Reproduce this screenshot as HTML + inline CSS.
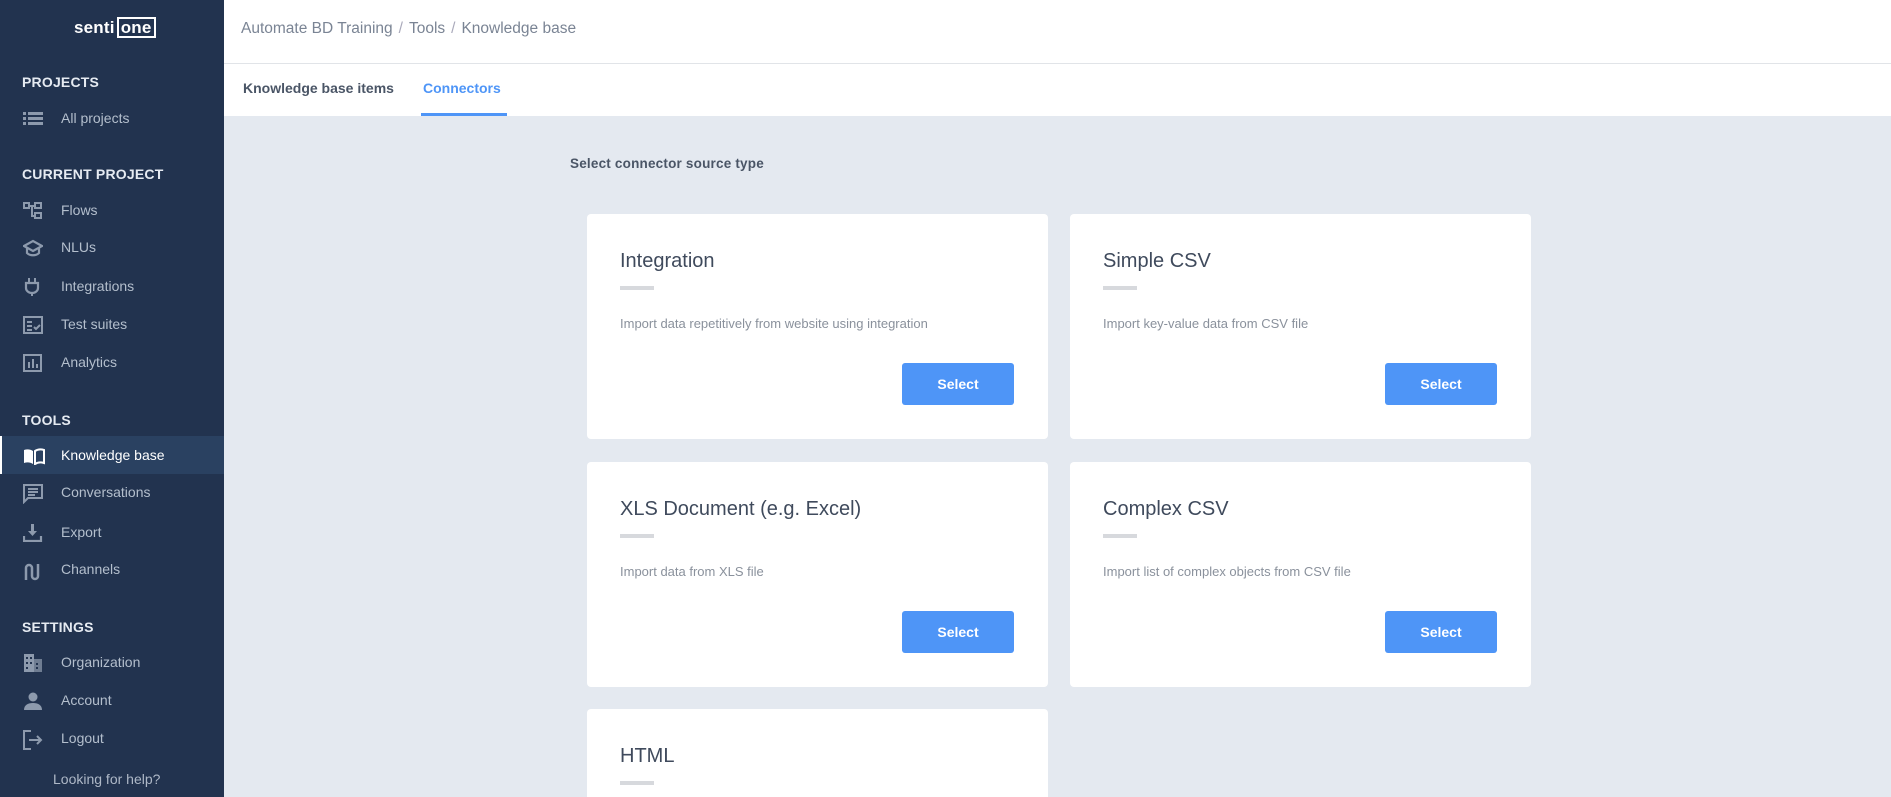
<!DOCTYPE html>
<html style="width:1891px;height:797px;overflow:hidden"><head><meta charset="utf-8"><style>
*{box-sizing:border-box;margin:0;padding:0}
body{width:1891px;height:797px;overflow:hidden;background:#e4e9f0;font-family:"Liberation Sans",sans-serif;position:relative}
.sb{position:absolute;left:0;top:0;width:224px;height:797px;background:#22334f;color:#aeb8c7}
.logo{position:absolute;left:74px;top:17px;color:#fff;font-size:17px;font-weight:bold;letter-spacing:0.2px}
.logo span{border:2px solid #fff;padding:0 2px;margin-left:2px;display:inline-block;line-height:17px}
.h{position:absolute;left:22px;font-size:14px;font-weight:bold;color:#e6ebf2;letter-spacing:0.2px}
.it{position:absolute;left:0;width:224px;height:38px;font-size:14px;color:#b4bfcd;line-height:38px;padding-left:61px}
.it svg{position:absolute;left:23px;top:11px}
.act{background:#2a4161;color:#fff;border-left:2px solid #fff}
.help{position:absolute;left:53px;top:771px;font-size:14px;color:#aeb8c7}
.top{position:absolute;left:224px;top:0;right:0;height:116px;background:#fff}
.bc{position:absolute;left:17px;top:20px;font-size:15.5px;color:#7a8494}
.bc i{font-style:normal;color:#aab;margin:0 6px}
.line{position:absolute;left:0;right:0;top:63px;border-top:1px solid #e1e4e8}
.tab{position:absolute;top:80px;font-size:14px;font-weight:bold;color:#4a5566}
.ul{position:absolute;left:197px;top:113px;width:86px;height:3px;background:#4e95f7}
.st{position:absolute;left:570px;top:156px;font-size:13.5px;color:#4a5566;font-weight:bold;letter-spacing:0.2px}
.card{position:absolute;width:461px;height:225px;background:#fff;border-radius:4px;overflow:hidden}
.card h3{position:absolute;left:33px;top:36px;font-size:20px;font-weight:normal;color:#3f4a5c}
.card .bar{position:absolute;left:33px;top:72px;width:34px;height:4px;background:#d7d9dd}
.card p{position:absolute;left:33px;top:102px;font-size:13px;color:#8a919c}
.card .btn{position:absolute;left:315px;top:149px;width:112px;height:42px;background:#4e95f7;border-radius:3px;color:#fff;font-weight:bold;font-size:14px;text-align:center;line-height:42px}
</style></head><body>
<div class="sb">
<div class="logo">senti<span>one</span></div>
<div class="h" style="top:74px">PROJECTS</div>
<div class="it" style="top:99px"><svg width="20" height="16" fill="#8d9aad"><rect x="0" y="2" width="3" height="3"/><rect x="5" y="2" width="15" height="3"/><rect x="0" y="7" width="3" height="3"/><rect x="5" y="7" width="15" height="3"/><rect x="0" y="12" width="3" height="3"/><rect x="5" y="12" width="15" height="3"/></svg>All projects</div>
<div class="h" style="top:166px">CURRENT PROJECT</div>
<div class="it" style="top:191px"><svg width="20" height="18" fill="none" stroke="#8d9aad" stroke-width="2"><rect x="1" y="1" width="5" height="5"/><rect x="12" y="1" width="6" height="5"/><rect x="12" y="11" width="6" height="5"/><path d="M6 4h6M9 4v10h3"/></svg>Flows</div>
<div class="it" style="top:228px"><svg width="20" height="18" fill="none" stroke="#8d9aad" stroke-width="2.2"><path d="M1 7l9-5 9 5-9 5z"/><path d="M4 9v5c3 3 9 3 12 0V9"/></svg>NLUs</div>
<div class="it" style="top:267px"><svg width="20" height="18" fill="#8d9aad"><rect x="5" y="0" width="2" height="5"/><rect x="11" y="0" width="2" height="5"/><path d="M3 5h12v5c0 3-3 5-6 5s-6-2-6-5z" fill="none" stroke="#8d9aad" stroke-width="2.2"/><rect x="8" y="14" width="2" height="4"/></svg>Integrations</div>
<div class="it" style="top:305px"><svg width="20" height="18" fill="none" stroke="#8d9aad" stroke-width="2"><rect x="1" y="1" width="18" height="16"/><path d="M4 6h5M4 10h5M4 14h5M11 11l2 2 4-4"/></svg>Test suites</div>
<div class="it" style="top:343px"><svg width="20" height="18" fill="#8d9aad"><rect x="1" y="1" width="17" height="16" fill="none" stroke="#8d9aad" stroke-width="2"/><rect x="5" y="8" width="2" height="6"/><rect x="9" y="5" width="2" height="9"/><rect x="13" y="10" width="2" height="4"/></svg>Analytics</div>
<div class="h" style="top:412px">TOOLS</div>
<div class="it act" style="top:436px;padding-left:59px"><svg width="22" height="18" style="left:21px"><path d="M1 3c3-1 6-1 9 1v13c-3-2-6-2-9-1z" fill="#fff"/><path d="M12 4c3-2 6-2 9-1v13c-3-1-6-1-9 1z" fill="none" stroke="#fff" stroke-width="2"/></svg>Knowledge base</div>
<div class="it" style="top:473px"><svg width="20" height="20" fill="none" stroke="#8d9aad" stroke-width="2"><path d="M1 1h18v13H5l-4 4z"/><path d="M5 5h10M5 8h10M5 11h7"/></svg>Conversations</div>
<div class="it" style="top:513px"><svg width="20" height="18" fill="#8d9aad"><path d="M8 0h3v7h3l-4.5 5L5 7h3z"/><path d="M1 12v5h17v-5" fill="none" stroke="#8d9aad" stroke-width="2.2"/></svg>Export</div>
<div class="it" style="top:550px"><svg width="20" height="20" fill="none" stroke="#8d9aad" stroke-width="2.5"><path d="M3 19V7a3 3 0 016 0v8a3 3 0 006 0V3"/></svg>Channels</div>
<div class="h" style="top:619px">SETTINGS</div>
<div class="it" style="top:643px"><svg width="20" height="18" fill="#8d9aad"><rect x="1" y="0" width="10" height="18"/><rect x="11" y="5" width="8" height="13" fill="#6f7d92"/><g fill="#22334f"><rect x="3" y="3" width="2" height="2"/><rect x="7" y="3" width="2" height="2"/><rect x="3" y="8" width="2" height="2"/><rect x="7" y="8" width="2" height="2"/><rect x="3" y="13" width="2" height="2"/><rect x="13" y="9" width="2" height="2"/><rect x="13" y="13" width="2" height="2"/></g></svg>Organization</div>
<div class="it" style="top:681px"><svg width="20" height="18" fill="#8d9aad"><circle cx="10" cy="5" r="4.5"/><path d="M1 18c0-5 4-7 9-7s9 2 9 7z"/></svg>Account</div>
<div class="it" style="top:719px"><svg width="20" height="20" fill="none" stroke="#8d9aad" stroke-width="2"><path d="M8 1H1v18h7M6 10h12M14 6l4 4-4 4"/></svg>Logout</div>
<div class="help">Looking for help?</div>
</div>
<div class="top">
<div class="bc">Automate BD Training<i>/</i>Tools<i>/</i>Knowledge base</div>
<div class="line"></div>
<div class="tab" style="left:19px">Knowledge base items</div>
<div class="tab" style="left:199px;color:#4e95f7">Connectors</div>
<div class="ul"></div>
</div>
<div class="st">Select connector source type</div>
<div class="card" style="left:587px;top:214px"><h3>Integration</h3><div class="bar"></div><p>Import data repetitively from website using integration</p><div class="btn">Select</div></div>
<div class="card" style="left:1070px;top:214px"><h3>Simple CSV</h3><div class="bar"></div><p>Import key-value data from CSV file</p><div class="btn">Select</div></div>
<div class="card" style="left:587px;top:462px"><h3>XLS Document (e.g. Excel)</h3><div class="bar"></div><p>Import data from XLS file</p><div class="btn">Select</div></div>
<div class="card" style="left:1070px;top:462px"><h3>Complex CSV</h3><div class="bar"></div><p>Import list of complex objects from CSV file</p><div class="btn">Select</div></div>
<div class="card" style="left:587px;top:709px;height:88px;border-radius:4px 4px 0 0"><h3>HTML</h3><div class="bar"></div></div>
</body></html>
